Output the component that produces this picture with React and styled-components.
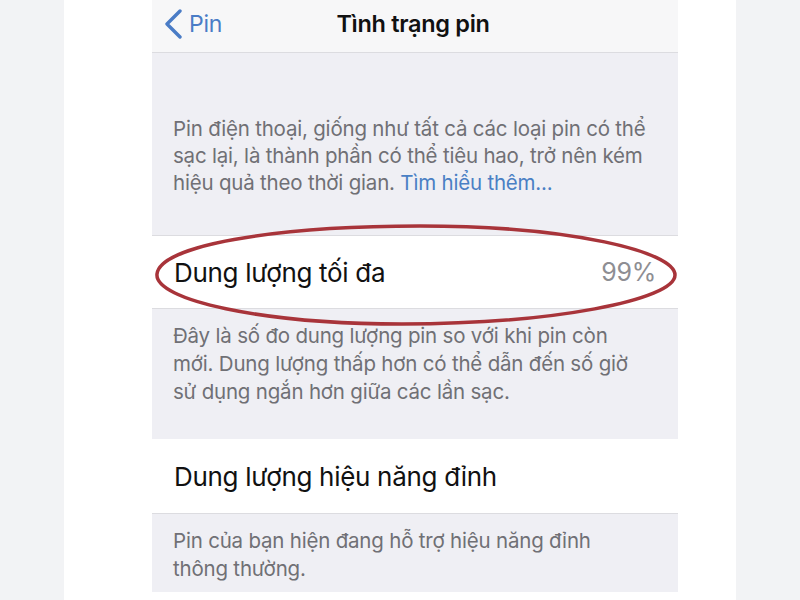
import React from "react";
import styled, { createGlobalStyle } from "styled-components";

const Global = createGlobalStyle`
  html, body { margin: 0; padding: 0; background: #ffffff; }
  body { font-family: "Inter", "Noto Sans", sans-serif; -webkit-font-smoothing: antialiased; }
`;

const Page = styled.div`
  display: flex;
  width: 800px;
  height: 600px;
  overflow: hidden;
  background: #ffffff;
`;

const Strip = styled.div`
  width: 64px;
  flex: none;
  background: #f2f3f5;
`;

const Gutter = styled.div`
  width: ${(p) => p.$w}px;
  flex: none;
  background: #ffffff;
`;

const Phone = styled.div`
  position: relative;
  width: 526px;
  flex: none;
  display: flex;
  flex-direction: column;
`;

const NavBar = styled.div`
  height: 53px;
  flex: none;
  display: grid;
  grid-template-columns: 1fr auto 1fr;
  align-items: center;
  background: #f7f7f8;
  border-bottom: 1px solid #dcdce0;
  box-sizing: border-box;
  padding: 0 11px 5px 11px;
`;

const Back = styled.div`
  display: flex;
  align-items: center;
  gap: 6px;
  color: #4a7cc6;
  font-size: 23px;
  letter-spacing: -0.2px;
`;

const Title = styled.div`
  font-size: 23.5px;
  font-weight: 600;
  color: #111;
  letter-spacing: -0.3px;
  transform: translateX(-2px);
`;

const Footer = styled.div`
  background: #efeff4;
  color: #707075;
  font-size: 20.5px;
  line-height: ${(p) => p.$lh || 27}px;
  padding: ${(p) => p.$pad};
  padding-left: 21px;
  white-space: nowrap;
  letter-spacing: -0.2px;
  border-bottom: ${(p) => (p.$line ? "1px solid #dcdce0" : "none")};
  flex: none;
`;

const Link = styled.span`
  color: #4a7fc4;
`;

const Row = styled.div`
  height: ${(p) => p.$h}px;
  flex: none;
  display: flex;
  align-items: center;
  justify-content: space-between;
  background: #ffffff;
  padding: 0 22px 0 22px;
  box-sizing: border-box;
  border-bottom: 1px solid #dcdce0;
`;

const Label = styled.span`
  font-size: 26px;
  color: #111;
  letter-spacing: -0.3px;
`;

const Value = styled.span`
  font-size: 25px;
  color: #8e8e93;
  letter-spacing: -0.3px;
`;

const Rest = styled.div`
  flex: 1;
  background: #ffffff;
`;

const Ellipse = styled.svg`
  position: absolute;
  left: 0;
  top: 0;
  pointer-events: none;
`;

export default function App() {
  return (
    <>
      <Global />
      <Page>
        <Strip />
        <Gutter $w={88} />
        <Phone>
          <NavBar>
            <Back>
              <svg width="20" height="30" viewBox="0 0 20 30">
                <path d="M17 2 L4 15 L17 28" fill="none" stroke="#4a7cc6" strokeWidth="3.4" strokeLinecap="round" strokeLinejoin="round" />
              </svg>
              <span>Pin</span>
            </Back>
            <Title>Tình trạng pin</Title>
            <div />
          </NavBar>
          <Footer $pad="62px 0 39px" $lh={27} $line>
            Pin điện thoại, giống như tất cả các loại pin có thể
            <br />
            sạc lại, là thành phần có thể tiêu hao, trở nên kém
            <br />
            hiệu quả theo thời gian. <Link>Tìm hiểu thêm...</Link>
          </Footer>
          <Row $h={73}>
            <Label>Dung lượng tối đa</Label>
            <Value>99%</Value>
          </Row>
          <Footer $pad="13px 0 33px" $lh={28}>
            Đây là số đo dung lượng pin so với khi pin còn
            <br />
            mới. Dung lượng thấp hơn có thể dẫn đến số giờ
            <br />
            sử dụng ngắn hơn giữa các lần sạc.
          </Footer>
          <Row $h={75}>
            <Label>Dung lượng hiệu năng đỉnh</Label>
          </Row>
          <Footer $pad="13px 0 9px" $lh={28}>
            Pin của bạn hiện đang hỗ trợ hiệu năng đỉnh
            <br />
            thông thường.
          </Footer>
          <Rest />
          <Ellipse width="526" height="600" viewBox="0 0 526 600">
            <path
              d="M5 274 C 8 246, 120 226, 268 226 C 420 226, 523 252, 523 275 C 523 300, 400 324, 250 324 C 110 324, 2 300, 5 274 Z"
              fill="none"
              stroke="#a8343a"
              strokeWidth="3.5"
            />
          </Ellipse>
        </Phone>
        <Gutter $w={58} />
        <Strip />
      </Page>
    </>
  );
}
